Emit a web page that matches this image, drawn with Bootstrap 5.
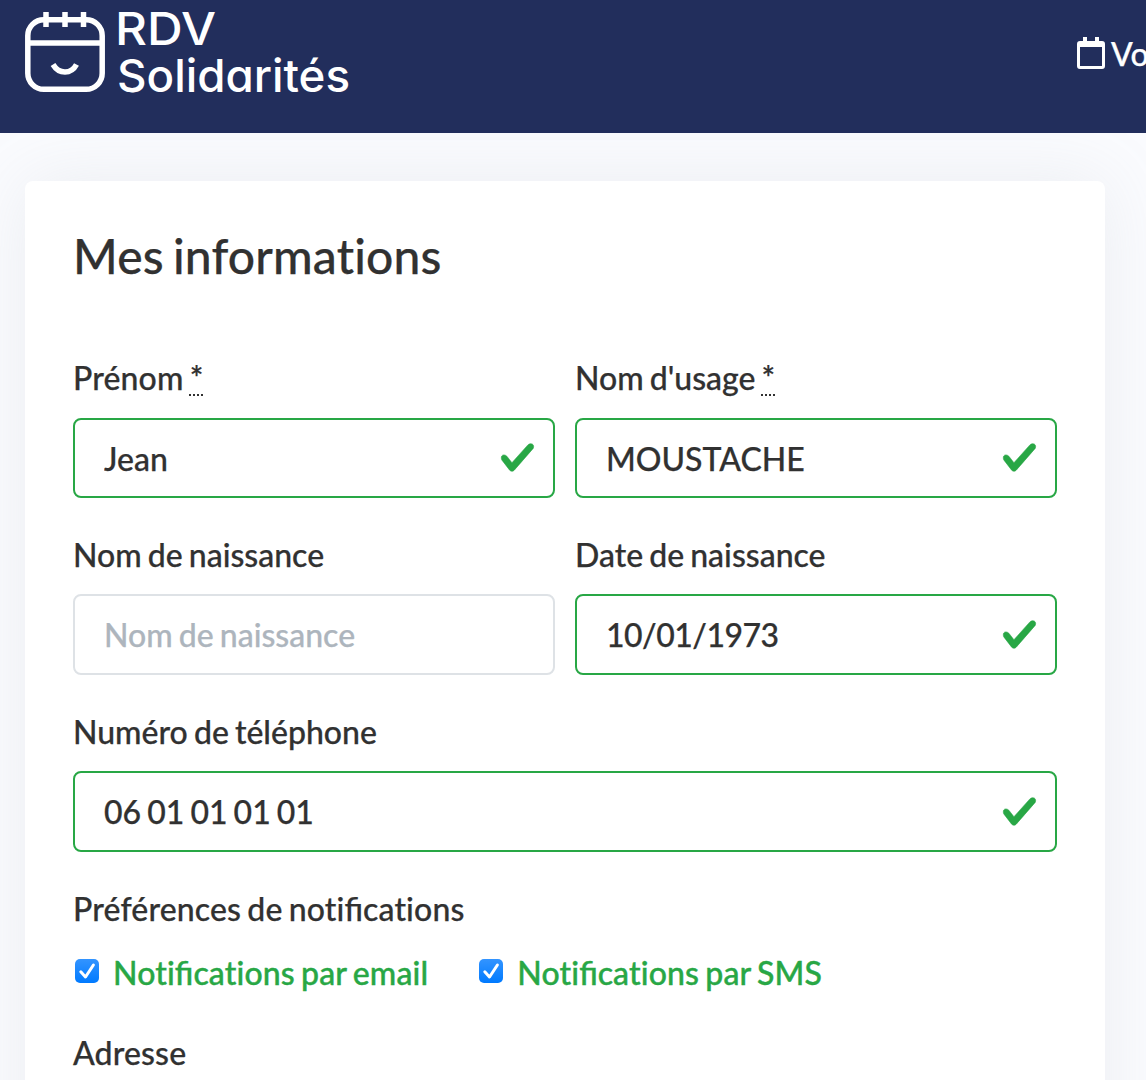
<!DOCTYPE html>
<html lang="fr">
<head>
<meta charset="utf-8">
<meta name="viewport" content="width=device-width, initial-scale=1">
<title>RDV Solidarités - Mes informations</title>
<link href="https://cdn.jsdelivr.net/npm/bootstrap@5.3.0/dist/css/bootstrap.min.css" rel="stylesheet">
<style>
  body { font-family: Lato, "Liberation Sans", sans-serif; font-size: 32px; line-height: 48px; color: #313131; background: #fafbfe; height: 1080px; overflow: hidden; font-variant-ligatures: no-common-ligatures; word-spacing: -2px; -webkit-text-stroke: .25px currentColor; }
  .lig { font-variant-ligatures: common-ligatures; letter-spacing: 0; }
  .site-header { height: 133px; background: #222e5c; padding: 4px 0 0 22px; }
  .logo-text { font-family: Inter, "Open Sans", sans-serif; font-weight: 500; font-size: 45px; font-feature-settings: "cv11"; fill: #fff; -webkit-text-stroke: 1.6px #fff; }
  .nav-appts { padding-top: 26px; width: 69px; color: #fff; white-space: nowrap; overflow: hidden; }
  .nav-appts svg { flex: none; margin-top: 7px; }
  .nav-appts span { margin-left: 6px; font-weight: 500; }
  .page-body { padding: 48px 41px 0 25px; height: 947px; overflow: hidden; }
  .info-card { border: 0; border-radius: 8px; padding: 48px; height: 1000px; box-shadow: 0 0 70px rgba(154,161,171,.15); }
  .info-title { font-size: 48px; line-height: 54px; font-weight: 500; margin-bottom: 70.6px; letter-spacing: .15px; word-spacing: -3px; }
  .field-row { --bs-gutter-x: 20px; }
  .field-block { margin-bottom: 32.3px; }
  .form-label { display: block; margin-bottom: 15.5px; padding-top: .5px; line-height: 48px; font-weight: 500; }
  .form-control { height: 80.5px; padding: 16.6px 29px 16px; border: 2px solid #dee2e6; border-radius: 8px; font-size: 32px; color: #313131; font-weight: 500; word-spacing: -2px; }
  .form-control::placeholder { color: #adb5bd; }
  .form-control.is-valid { border-color: #28a745; padding-right: 80px; background: #fff url("data:image/svg+xml,%3csvg xmlns='http://www.w3.org/2000/svg' viewBox='0 0 8 8'%3e%3cpath fill='%2328a745' stroke='%2328a745' stroke-width='.12' d='M2.3 6.73L.6 4.53c-.4-1.04.46-1.4 1.1-.8l1.1 1.4 3.4-3.8c.6-.63 1.6-.27 1.2.7l-4 4.6c-.43.5-.8.4-1.1.1z'/%3e%3c/svg%3e") no-repeat right 17.5px top 19.7px / 37px 37px; }
  .tight { letter-spacing: -.5px; }
  .loose { letter-spacing: .14px; }
  abbr[title] { text-decoration: underline dotted 2px; text-underline-offset: 4px; font-weight: 600; }
  .notif-head { padding-top: 1.3px; margin-bottom: 16px; }
  .notif-row { gap: 51px; margin-bottom: 31.5px; padding-left: 2px; -webkit-text-stroke-width: .4px; }
  .notif-row .form-check { gap: 14px; color: #28a745; font-weight: 500; padding: 0; margin: 0; min-height: 0; -webkit-text-stroke-color: #28a745; }
  .notif-row .form-check-input { flex: none; width: 24px; height: 24px; border: 0; margin: -4px 0 0; border-radius: 5px; }
  .form-check-input:checked { background-color: #0a7cff; background-size: 24px 24px; background-image: url("data:image/svg+xml,%3csvg xmlns='http://www.w3.org/2000/svg' viewBox='0 0 24 24'%3e%3cpath fill='none' stroke='%23fff' stroke-width='3' stroke-linecap='round' stroke-linejoin='round' d='M5.800 12.800l4.700 5.200L18.400 6'/%3e%3c/svg%3e"), linear-gradient(#3394ff, #007aff); }
</style>
</head>
<body>
<header class="site-header d-flex justify-content-between align-items-start">
  <a href="#" aria-label="RDV Solidarités">
    <svg class="d-block" width="336" height="104" viewBox="22 4 336 104">
      <g fill="none" stroke="#fff" stroke-width="5.5">
        <rect x="27.800" y="19.700" width="74.400" height="69.600" rx="16"/>
        <path d="M28 43h74M46 12v15M65 12v15M83.500 12v15"/>
        <path d="M53 64.500Q57.500 72 65 72T76.500 64.500"/>
      </g>
      <text class="logo-text" x="115" y="45" textLength="101" lengthAdjust="spacingAndGlyphs">RDV</text>
      <text class="logo-text" x="117" y="91.500" textLength="233" lengthAdjust="spacingAndGlyphs">Solidarités</text>
    </svg>
  </a>
  <nav class="nav-appts d-flex align-items-start">
    <svg width="28" height="32" viewBox="0 0 28 32"><path fill="#fff" fill-rule="evenodd" d="M6 0h4v4h8V0h4v4h3a3 3 0 0 1 3 3v22a3 3 0 0 1-3 3H3a3 3 0 0 1-3-3V7a3 3 0 0 1 3-3h3zM3 10v19h22V10z"/></svg>
    <span>Vo</span>
  </nav>
</header>
<main class="page-body">
  <section class="card info-card">
    <h1 class="info-title">Mes informations</h1>
    <form>
      <div class="row field-row">
        <div class="col-6 field-block">
          <label class="form-label loose" for="first">Prénom <abbr title="requis">*</abbr></label>
          <input id="first" class="form-control is-valid" value="Jean">
        </div>
        <div class="col-6 field-block">
          <label class="form-label" for="last">Nom d'usage <abbr title="requis">*</abbr></label>
          <input id="last" class="form-control is-valid" value="MOUSTACHE">
        </div>
        <div class="col-6 field-block">
          <label class="form-label" for="birthname">Nom de naissance</label>
          <input id="birthname" class="form-control" placeholder="Nom de naissance">
        </div>
        <div class="col-6 field-block">
          <label class="form-label" for="birthdate">Date de naissance</label>
          <input id="birthdate" class="form-control is-valid tight" value="10/01/1973">
        </div>
        <div class="col-12 field-block">
          <label class="form-label" for="phone">Numéro de téléphone</label>
          <input id="phone" class="form-control is-valid" value="06 01 01 01 01">
        </div>
      </div>
      <div class="form-label notif-head loose">Préférences de noti<span class="lig">fi</span>cations</div>
      <div class="notif-row d-flex loose">
        <label class="form-check d-flex align-items-center"><input class="form-check-input" type="checkbox" checked><span>Noti<span class="lig">fi</span>cations par email</span></label>
        <label class="form-check d-flex align-items-center"><input class="form-check-input" type="checkbox" checked><span>Noti<span class="lig">fi</span>cations par SMS</span></label>
      </div>
      <div class="form-label loose">Adresse</div>
    </form>
  </section>
</main>
<script src="https://cdn.jsdelivr.net/npm/bootstrap@5.3.0/dist/js/bootstrap.bundle.min.js"></script>
</body>
</html>
